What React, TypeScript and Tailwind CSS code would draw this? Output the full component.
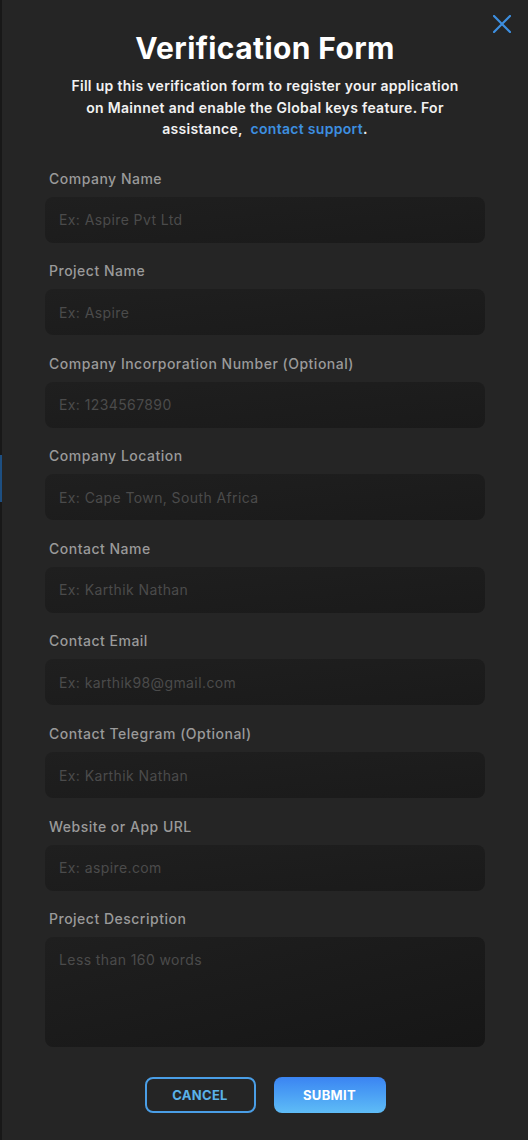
const fields = [
  { label: "Company Name", placeholder: "Ex: Aspire Pvt Ltd" },
  { label: "Project Name", placeholder: "Ex: Aspire" },
  { label: "Company Incorporation Number (Optional)", placeholder: "Ex: 1234567890" },
  { label: "Company Location", placeholder: "Ex: Cape Town, South Africa" },
  { label: "Contact Name", placeholder: "Ex: Karthik Nathan" },
  { label: "Contact Email", placeholder: "Ex: karthik98@gmail.com" },
  { label: "Contact Telegram (Optional)", placeholder: "Ex: Karthik Nathan" },
  { label: "Website or App URL", placeholder: "Ex: aspire.com" },
];

function CloseIcon() {
  return (
    <svg width="18" height="18" viewBox="0 0 18 18" fill="none">
      <path d="M1 1L17 17M17 1L1 17" stroke="#3d8fe0" strokeWidth="2.2" strokeLinecap="round" />
    </svg>
  );
}

export default function App() {
  return (
    <div className="flex h-[1140px] w-[528px] overflow-hidden bg-[#181818] font-['Inter',sans-serif]">
      <div className="flex w-[2px] shrink-0 flex-col">
        <div className="mt-[455px] h-[47px] bg-[#1d4f82]" />
      </div>

      <div className="relative flex flex-1 flex-col bg-[#252525] px-[43px] pt-[30px]">
        <button type="button" className="absolute right-[17px] top-[15px]">
          <CloseIcon />
        </button>

        <h1 className="text-center text-[30px] font-bold leading-[36px] tracking-[0.4px] text-white">
          Verification Form
        </h1>
        <p className="mx-auto mt-[9px] w-[400px] text-center text-[14px] font-semibold leading-[21.5px] tracking-[0.3px] text-[#f2f2f2]">
          Fill up this verification form to register your application on Mainnet and enable the
          Global keys feature. For assistance,&nbsp;{" "}
          <span className="whitespace-nowrap">
            <a href="#" className="text-[#3d8fe0]">
              contact support
            </a>
            .
          </span>
        </p>

        <form className="mt-[29px] flex flex-col gap-[18.6px]">
          {fields.map((f) => (
            <div key={f.label} className="flex flex-col">
              <label className="pl-[4px] text-[14px] font-medium leading-[20px] tracking-[0.5px] text-[#9a9a9a]">
                {f.label}
              </label>
              <input
                type="text"
                placeholder={f.placeholder}
                className="mt-[8px] h-[46px] w-full rounded-[8px] bg-gradient-to-br from-[#1f1f1f] to-[#1a1a1a] px-[14px] text-[14px] tracking-[0.4px] text-white outline-none placeholder:text-[#4b4b4b]"
              />
            </div>
          ))}
          <div className="flex flex-col">
            <label className="pl-[4px] text-[14px] font-medium leading-[20px] tracking-[0.5px] text-[#9a9a9a]">
              Project Description
            </label>
            <textarea
              placeholder="Less than 160 words"
              className="mt-[8px] h-[110px] w-full resize-none rounded-[8px] bg-gradient-to-br from-[#1f1f1f] to-[#161616] px-[14px] py-[13px] text-[14px] leading-[20px] tracking-[0.4px] text-white outline-none placeholder:text-[#4b4b4b]"
            />
          </div>
        </form>

        <div className="mt-[30px] flex justify-center gap-[18px]">
          <button
            type="button"
            className="h-[36px] w-[111px] rounded-[8px] border-2 border-[#4a9ee6] text-[13px] font-bold tracking-[0.3px] text-[#5ab2ea]"
          >
            CANCEL
          </button>
          <button
            type="button"
            className="h-[36px] w-[112px] rounded-[8px] bg-gradient-to-b from-[#3b84f2] to-[#5fbcf6] text-[13px] font-bold tracking-[0.3px] text-white"
          >
            SUBMIT
          </button>
        </div>
      </div>
    </div>
  );
}
